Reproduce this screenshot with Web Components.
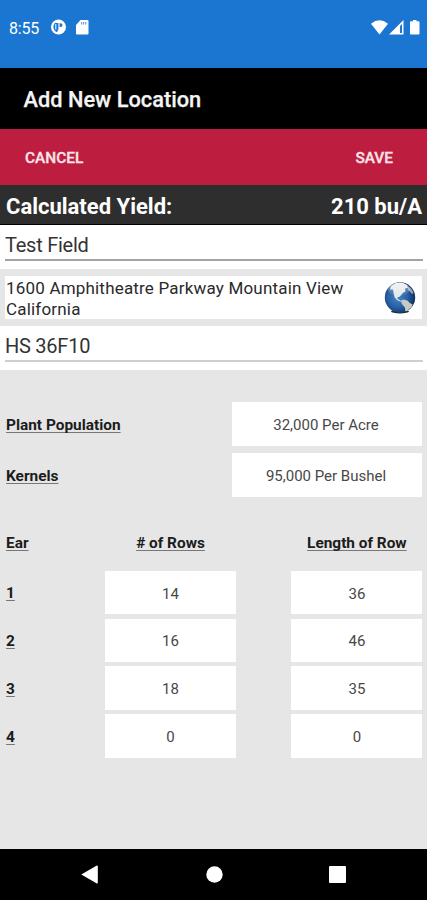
<!DOCTYPE html>
<html lang="en">
<head>
<meta charset="utf-8">
<title>Add New Location</title>
<style>
  html, body {
    margin: 0;
    height: 100%;
    overflow: hidden;
  }
  body {
    font-family: Roboto, "Noto Sans", sans-serif;
    background: #e6e6e6;
  }
</style>
</head>
<body>
<location-screen></location-screen>

<script>
const define = (name, html, setup) => {
  const template = document.createElement("template");
  template.innerHTML = html;
  customElements.define(
    name,
    class extends HTMLElement {
      constructor() {
        super();
        this.attachShadow({ mode: "open" });
        this.shadowRoot.appendChild(template.content.cloneNode(true));
        if (setup) setup(this.shadowRoot);
      }
    }
  );
};

define("status-bar", `
<style>
  :host {
    display: flex;
    justify-content: space-between;
    box-sizing: border-box;
    height: 68px;
    padding: 18px 7px 0 9px;
    background: #1b76d2;
    color: #fff;
  }
  .group { display: flex; height: 18px; align-items: center; }
  .time { font-size: 16px; line-height: 18px; letter-spacing: -.2px; width: 42px; padding-top: 3px; }
  svg { display: block; fill: #fff; }
</style>
<div class="group">
  <span class="time"><slot></slot></span>
  <svg width="15" height="16" viewBox="0 0 15 16">
    <circle cx="7.5" cy="8" r="7.5"/>
    <path fill="#1b76d2" d="M3.8 4h3.600v6.200L6 13.200Q2.400 11.400 2.400 8q0-2.400 1.400-4zM8.600 4.200h1a1.900 1.900 0 0 1 0 3.800h-1z"/>
    <path d="M4.300 5h1v5.500h-1z"/>
  </svg>
  <svg width="13" height="15" viewBox="0 0 13 15" style="margin-left: 10px">
    <path d="M4.5 0h7a1 1 0 0 1 1 1v12.500a1 1 0 0 1-1 1H1a1 1 0 0 1-1-1V5z"/>
    <path fill="#6aa5e2" d="M5 2h1.200v2.400H5zM7 2h1.200v2.400H7zM9 2h1.200v2.400H9z"/>
  </svg>
</div>
<div class="group">
  <svg width="17" height="15" viewBox="0 0 17 15">
    <path d="M0 3.700Q8.500-3 17 3.700L8.500 14.500z"/>
  </svg>
  <svg width="15" height="15" viewBox="0 0 15 15" style="margin-left: 1px">
    <path fill-rule="evenodd" d="M14.500 0v14.500H0zM11 6v7h2V4z"/>
  </svg>
  <svg width="10" height="15" viewBox="0 0 10 15" style="margin-left: 6px">
    <path d="M3 0h3.500v1.300h2a1 1 0 0 1 1 1v11.200a1 1 0 0 1-1 1H1a1 1 0 0 1-1-1V2.300a1 1 0 0 1 1-1h2z"/>
  </svg>
</div>
`);

define("title-bar", `
<style>
  :host {
    display: flex;
    align-items: center;
    box-sizing: border-box;
    height: 61px;
    padding: 2px 23.5px 0;
    background: #000;
    color: #f4f4f4;
    font-size: 21.8px;
    font-weight: 500;
    -webkit-text-stroke: .25px;
  }
</style>
<slot></slot>
`);

define("action-bar", `
<style>
  :host {
    display: flex;
    align-items: center;
    justify-content: space-between;
    box-sizing: border-box;
    height: 56px;
    padding: 2px 34px 0 25px;
    background: #bd1d3f;
    color: #fbe4e8;
    font-size: 15.4px;
    font-weight: 500;
    -webkit-text-stroke: .3px;
  }
</style>
<slot></slot>
`);

define("yield-bar", `
<style>
  :host {
    display: flex;
    align-items: center;
    justify-content: space-between;
    box-sizing: border-box;
    height: 40px;
    padding: 3px 5px 0 6px;
    background: #2e2e2e;
    border-bottom: 1px solid #000;
    color: #fff;
    font-size: 22px;
    font-weight: 700;
  }
</style>
<slot></slot>
`);

define("text-field", `
<style>
  :host {
    display: block;
    box-sizing: border-box;
    height: 44px;
    padding: 0 4px 0 5px;
    background: #fff;
    color: #333;
    font-size: 20px;
    letter-spacing: -.25px;
  }
  .line {
    box-sizing: border-box;
    height: 36px;
    padding-top: 8px;
    line-height: 24px;
    border-bottom: 2px solid var(--line, #a4a4a4);
  }
</style>
<div class="line"><slot></slot></div>
`);

define("earth-icon", `
<style>
  :host { display: block; width: 32px; height: 32px; }
  svg { display: block; }
</style>
<svg width="32" height="32" viewBox="0 0 32 32">
  <defs>
    <radialGradient id="sea" cx=".42" cy=".5" r=".6">
      <stop offset="0" stop-color="#4187cb"/>
      <stop offset=".55" stop-color="#2860a3"/>
      <stop offset="1" stop-color="#102a56"/>
    </radialGradient>
    <linearGradient id="shine" x1="0" y1="0" x2="0" y2="1">
      <stop offset="0" stop-color="#fff" stop-opacity=".5"/>
      <stop offset="1" stop-color="#fff" stop-opacity="0"/>
    </linearGradient>
    <clipPath id="ball"><circle cx="16" cy="15.500" r="15.200"/></clipPath>
  </defs>
  <ellipse cx="16" cy="29.600" rx="9" ry="1.800" fill="#1b2c47"/>
  <circle cx="16" cy="15.500" r="15.200" fill="url(#sea)"/>
  <g clip-path="url(#ball)">
    <path fill="#e3e8ea" d="M7 4l5-3 6-.6 5 2.600 1 3-3 .6.500 3-2.500 1.200-1.600 2-1.800 2-2.200.4.200 1.800 2.800 1.400 1.400 1-1.600.2-3.200-1.600-2.400-2.800-1-4-.6-3.800-3 .2z"/>
    <path fill="#c6c9c4" d="M17 18.400l2.600-.8 4.200 1.200 1.600 2 3.200 1.600-1.200 3-2.400 1.600-1.800 3-1.800-.8-.6-4-3-3.200z"/>
    <path fill="#8fa9c2" d="M24.500 4.500l3 2.500 2 4-1.500 1-2.500-3-2-1z"/>
    <ellipse cx="15" cy="7.500" rx="11" ry="7" fill="url(#shine)"/>
  </g>
</svg>
`);

define("address-box", `
<style>
  :host {
    display: flex;
    align-items: center;
    justify-content: space-between;
    box-sizing: border-box;
    height: 43px;
    margin: 7px 5px;
    padding: 0 6px 0 1px;
    background: #fff;
    color: #2a2a2a;
    font-size: 17px;
    line-height: 20.5px;
  }
  .text { width: 360px; padding-top: 2px; letter-spacing: .19px; }
</style>
<div class="text"><slot></slot></div>
<earth-icon></earth-icon>
`);

define("row-label", `
<style>
  :host {
    display: block;
    padding-top: var(--label-drop, 3px);
    color: #1c1c1c;
    font-size: 15.4px;
    line-height: 18px;
    font-weight: 700;
  }
  span {
    text-decoration: underline;
    text-decoration-color: #777;
    text-decoration-thickness: 1px;
    text-underline-offset: 2px;
    text-decoration-skip-ink: none;
  }
</style>
<span><slot></slot></span>
`);

define("value-box", `
<style>
  :host {
    display: flex;
    align-items: center;
    justify-content: center;
    box-sizing: border-box;
    height: 43.5px;
    padding: 2px var(--nudge, 2px) 0 0;
    background: #fff;
    color: #484848;
    font-size: 15px;
  }
</style>
<slot></slot>
`);

define("setting-list", `
<style>
  :host {
    display: grid;
    grid-template-columns: 1fr 190px;
    grid-auto-rows: 43.5px;
    row-gap: 7.5px;
    align-items: center;
    padding: 32px 5px 0 6px;
  }
</style>
<slot></slot>
`);

define("ear-table", `
<style>
  :host {
    display: grid;
    grid-template-columns: 99px 131px 55.4px 131px;
    grid-auto-rows: 43.5px;
    row-gap: 4.3px;
    align-items: center;
    padding-left: 6px;
    margin-top: 26.6px;
    --label-drop: 1px;
    --nudge: 0px;
  }
  .rows { grid-column: 2; }
  .length { grid-column: 4; }
  .head { margin-top: -4px; }
  .head.rows, .head.length { text-align: center; }
</style>
`, (root) => {
  const add = (tag, text, className) => {
    const el = document.createElement(tag);
    el.textContent = text;
    el.className = className;
    root.appendChild(el);
  };
  add("row-label", "Ear", "head");
  add("row-label", "# of Rows", "head rows");
  add("row-label", "Length of Row", "head length");
  // one line per sampled ear: rows, length
  [[14, 36], [16, 46], [18, 35], [0, 0]].forEach(([rows, length], i) => {
    add("row-label", i + 1, "");
    add("value-box", rows, "rows");
    add("value-box", length, "length");
  });
});

define("nav-bar", `
<style>
  :host {
    display: grid;
    grid-template-columns: 179px 70px 176px;
    align-items: center;
    justify-items: center;
    height: 51px;
    background: #000;
  }
  svg { display: block; fill: #fff; }
</style>
<svg width="17" height="19" viewBox="0 0 17 19"><path d="M.3 9.500L15.400.7q1.400-.6 1.400.7v16.200q0 1.300-1.400.7z"/></svg>
<svg width="17" height="17" viewBox="0 0 17 17"><circle cx="8.500" cy="8.500" r="8.200"/></svg>
<svg width="17" height="17" viewBox="0 0 17 17"><rect width="17" height="17" rx="1"/></svg>
`);

define("location-screen", `
<style>
  :host {
    display: flex;
    flex-direction: column;
    width: 427px;
    height: 900px;
    background: #e6e6e6;
  }
  nav-bar { margin-top: auto; }
  .hybrid { --line: #cfcfcf; }
</style>
<status-bar>8:55</status-bar>
<title-bar>Add New Location</title-bar>
<action-bar><span>CANCEL</span><span>SAVE</span></action-bar>
<yield-bar><span>Calculated Yield:</span><span>210 bu/A</span></yield-bar>
<text-field>Test Field</text-field>
<address-box>1600 Amphitheatre Parkway Mountain View California</address-box>
<text-field class="hybrid">HS 36F10</text-field>
<setting-list>
  <row-label>Plant Population</row-label><value-box>32,000 Per Acre</value-box>
  <row-label>Kernels</row-label><value-box>95,000 Per Bushel</value-box>
</setting-list>
<ear-table></ear-table>
<nav-bar></nav-bar>
`);
</script>
</body>
</html>
